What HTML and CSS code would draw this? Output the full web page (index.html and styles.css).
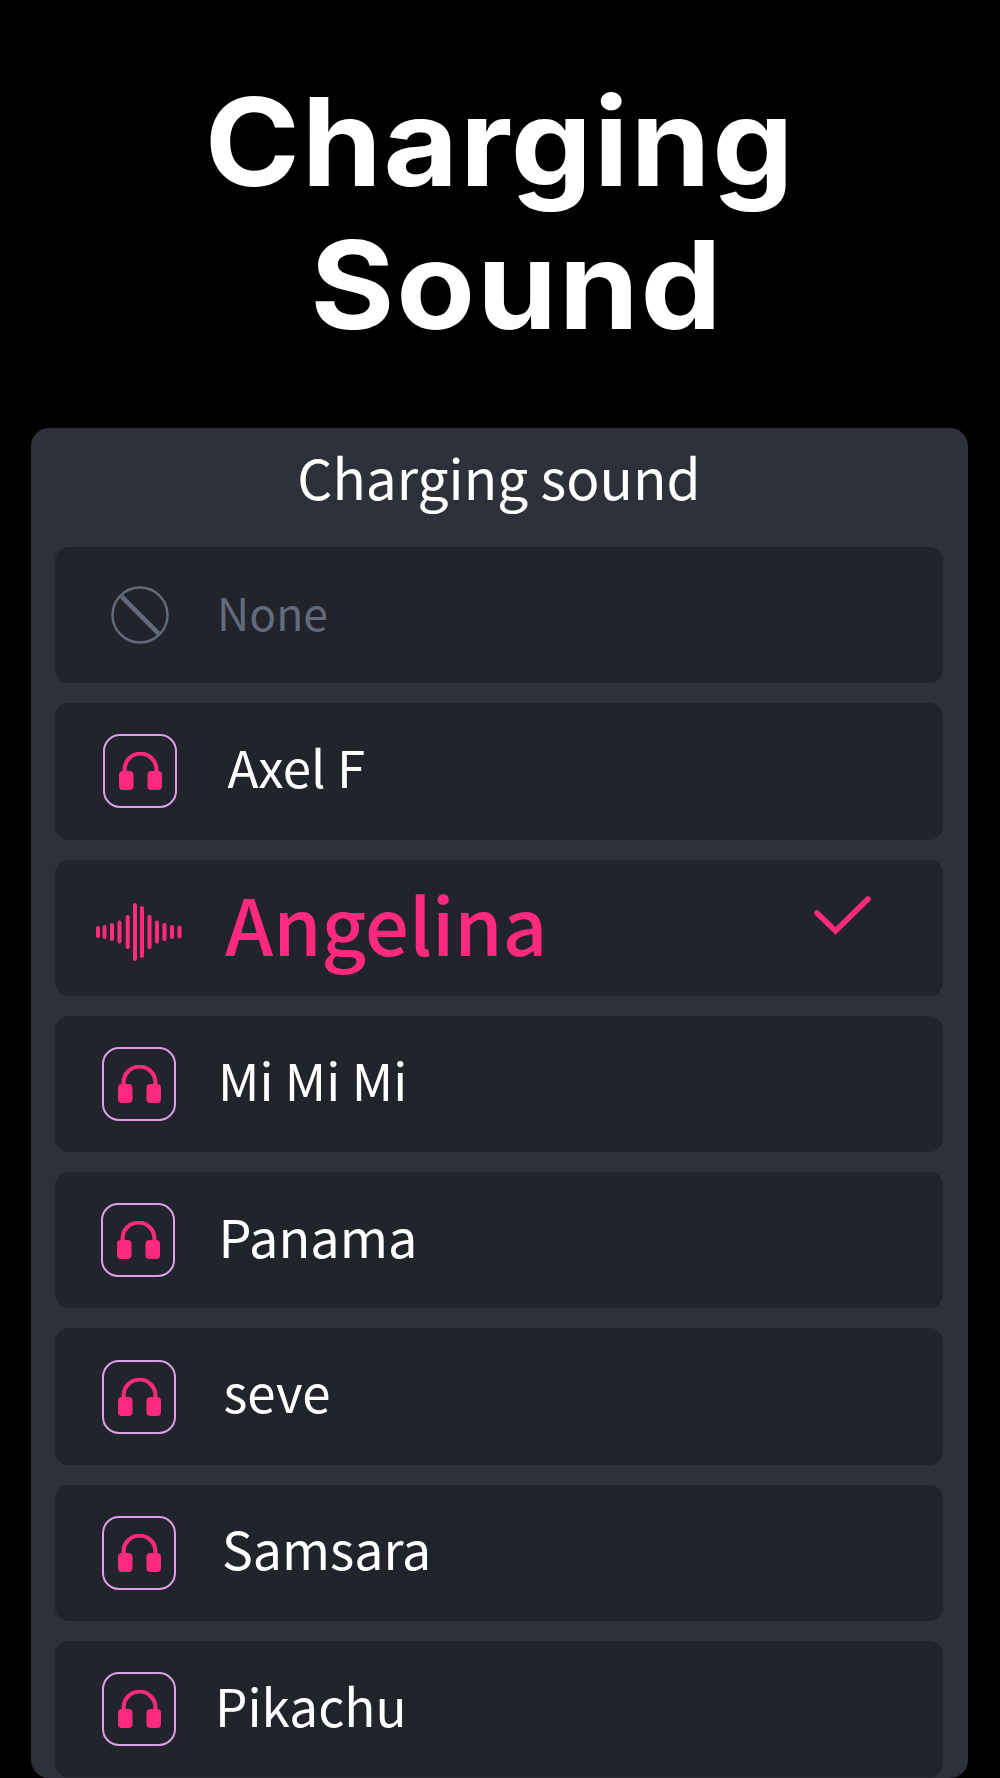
FILE: index.html
```html
<!DOCTYPE html>
<html lang="en">
<head>
<meta charset="utf-8">
<title>Charging Sound</title>
<link rel="stylesheet" href="styles.css">
</head>
<body>
<svg class="defs" width="0" height="0" aria-hidden="true">
  <symbol id="phones" viewBox="0 0 43 38">
    <path d="M5.600 22V17.500a15.900 15.900 0 0 1 31.800 0V22" fill="none" stroke="#ff2a7f" stroke-width="4"/>
    <rect x="0" y="19" width="14.500" height="19" rx="4" fill="#ff2a7f"/>
    <rect x="28.500" y="19" width="14.500" height="19" rx="4" fill="#ff2a7f"/>
  </symbol>
</svg>
<main class="page">
  <h1 class="title"><span class="title-line">Charging</span><span class="title-line title-line-2">Sound</span></h1>
  <section class="panel">
    <h2 class="panel-title">Charging sound</h2>
    <ul class="list">
      <li class="row row-none">
        <svg class="none-icon" viewBox="0 0 58 58"><circle cx="29" cy="29" r="27.500" fill="none" stroke="#626b7c" stroke-width="2.400"/><path d="M10.700 10.700l36.600 36.600" stroke="#626b7c" stroke-width="4.500"/></svg>
        <span class="name name-none">None</span>
      </li>
      <li class="row"><span class="badge b103"><svg class="phones"><use href="#phones"/></svg></span><span class="name t-axel">Axel F</span></li>
      <li class="row row-active">
        <svg class="wave" viewBox="0 0 86 58">
          <g stroke="#ff2a7f" stroke-width="4" stroke-linecap="round" fill="none">
            <path d="M2 25v8M8.500 24v10M16 22v14M23.500 19.500v19M31.700 14v30M39 2v54M46 5v48M53.500 14v30M61 19.500v19M68.500 22v14M76 24v10M83.500 24.500v9"/>
          </g>
        </svg>
        <span class="name name-active">Angelina</span>
        <svg class="check" viewBox="0 0 60 40"><path d="M5 17l18.500 18L56 3" fill="none" stroke="#ff2a7f" stroke-width="5.500" stroke-linecap="round"/></svg>
      </li>
      <li class="row"><span class="badge b102"><svg class="phones"><use href="#phones"/></svg></span><span class="name t-mimi">Mi Mi Mi</span></li>
      <li class="row"><span class="badge b101"><svg class="phones"><use href="#phones"/></svg></span><span class="name t-panama">Panama</span></li>
      <li class="row"><span class="badge b102"><svg class="phones"><use href="#phones"/></svg></span><span class="name t-seve">seve</span></li>
      <li class="row"><span class="badge b102"><svg class="phones"><use href="#phones"/></svg></span><span class="name t-samsara">Samsara</span></li>
      <li class="row"><span class="badge b102"><svg class="phones"><use href="#phones"/></svg></span><span class="name t-pikachu">Pikachu</span></li>
    </ul>
  </section>
</main>
</body>
</html>
```
FILE: styles.css
```css
* { box-sizing: border-box; }
html, body { margin: 0; padding: 0; background: #000; }
body { width: 1000px; height: 1778px; overflow: hidden; font-family: "Noto Sans CJK SC", "Noto Sans", sans-serif; color: #fff; }
.defs { position: absolute; }
.page { display: flex; flex-direction: column; }
.title { margin: 0; padding-top: 70px; height: 428px; font-family: Inter, "Liberation Sans", sans-serif; font-weight: 700; font-size: 122px; line-height: 143px; letter-spacing: 1.6px; font-optical-sizing: none; font-variation-settings: "opsz" 14; text-align: center; transform: scaleX(1.055); }
.title-line { display: block; }
.title-line-2 { margin-left: 32px; }
.panel { width: 937px; height: 1350px; margin-left: 31px; background: #2e3139; border-radius: 18px; padding: 0 25px 0 24px; overflow: hidden; }
.panel-title { margin: 0; height: 119px; font-weight: 400; font-size: 55px; line-height: 96px; text-align: center; }
.list { list-style: none; margin: 0; padding: 0; display: flex; flex-direction: column; gap: 20px; }
.row { height: 136.3px; flex: none; background: #21242b; border-radius: 14px; display: flex; align-items: center; position: relative; }
.badge { width: 74px; height: 74px; flex: none; border: 2px solid #dd9fe8; border-radius: 17px; display: flex; align-items: center; justify-content: center; }
.b103 { margin-left: 48px; }
.b102 { margin-left: 47px; }
.b101 { margin-left: 46px; }
.phones { width: 43px; height: 38px; display: block; }
.name { font-size: 51px; line-height: 1; margin-bottom: 10px; }
.t-axel { margin-left: 50.5px; }
.t-mimi { margin-left: 42px; }
.t-panama { margin-left: 43.5px; font-size: 52.2px; }
.t-seve { margin-left: 47.5px; }
.t-samsara { margin-left: 46px; font-size: 51.8px; }
.t-pikachu { margin-left: 39px; font-size: 51.3px; }
.none-icon { width: 58px; height: 58px; margin-left: 56px; flex: none; }
.name-none { color: #626b7c; font-size: 44.5px; margin-left: 48px; margin-bottom: 5px; }
.wave { width: 86px; height: 58px; margin-left: 41px; margin-top: 8px; flex: none; }
.name-active { color: #ff2a7f; font-size: 77.5px; font-weight: 500; margin-left: 43px; }
.check { width: 60px; height: 40px; position: absolute; left: 757px; top: 36px; }
```
